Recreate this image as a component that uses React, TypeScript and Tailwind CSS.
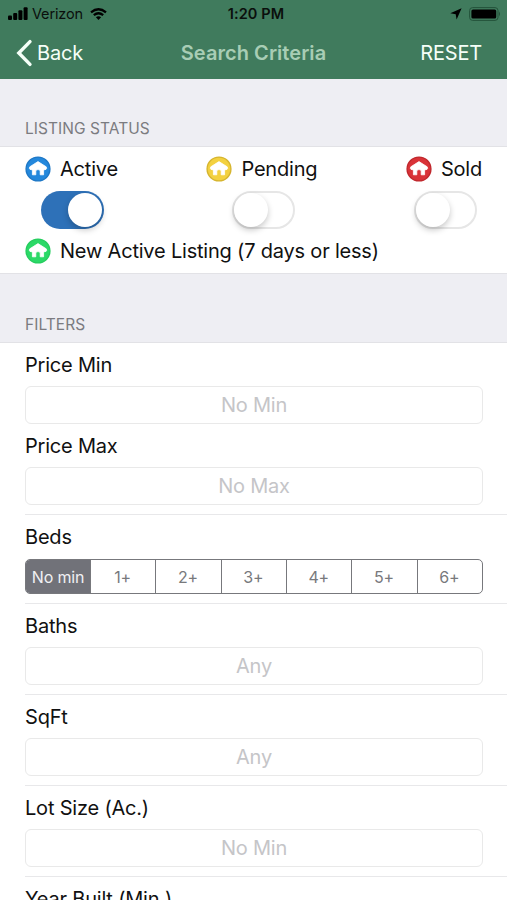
import React from "react";

type StatusColor = { fill: string; ring: string };

function HouseBadge({ color }: { color: StatusColor }) {
  return (
    <svg width="26" height="26" viewBox="0 0 26 26" className="shrink-0">
      <circle cx="13" cy="13" r="11.9" fill={color.fill} stroke={color.ring} strokeWidth="1.4" />
      <path
        d="M13 5.6 L21.2 10.8 Q22.2 12.6 21 13.4 L18.6 13.9 V18.8 H15.2 V14.4 Q13 12.6 10.8 14.4 V18.8 H7.4 V13.9 L5 13.4 Q3.8 12.6 4.8 10.8 Z"
        fill="#fff"
        stroke="#fff"
        strokeWidth="0.8"
        strokeLinejoin="round"
      />
    </svg>
  );
}

function StatusLabel({ color, text }: { color: StatusColor; text: string }) {
  return (
    <div className="flex h-[26px] items-center">
      <HouseBadge color={color} />
      <span className="ml-[9px] whitespace-nowrap">{text}</span>
    </div>
  );
}

function Toggle({ on = false }: { on?: boolean }) {
  return (
    <div
      className={
        on
          ? "flex h-[38px] w-[63px] items-center justify-end rounded-full bg-[#2e71b8] px-[2px]"
          : "flex h-[38px] w-[63px] items-center justify-start rounded-full border-2 border-[#e6e6e6] bg-white"
      }
    >
      <div className="size-[34px] rounded-full bg-white shadow-[0_3px_6px_rgba(0,0,0,0.22)]" />
    </div>
  );
}

function Field({ label, placeholder }: { label: string; placeholder: string }) {
  return (
    <div className="pt-[9px]">
      <div className="h-[26px]">{label}</div>
      <div className="mt-2 mr-6 flex h-[38px] items-center justify-center rounded-[6px] border border-[#e9e9e9] text-[#c5c5c8]">
        {placeholder}
      </div>
    </div>
  );
}

function Row({ children }: { children: React.ReactNode }) {
  return <div className="ml-[25px] border-b border-[#e8e8ea] pb-[9px]">{children}</div>;
}

function SectionTitle({ children }: { children: React.ReactNode }) {
  return (
    <div className="flex items-end bg-[#eeeef3] pb-[7px] pl-[25px] text-[15.5px] leading-5 tracking-[0.05px] text-[#7b7b80]">
      {children}
    </div>
  );
}

const blue = { fill: "#2488dc", ring: "#1f78c6" };
const yellow = { fill: "#f3d140", ring: "#d6b52f" };
const red = { fill: "#d93338", ring: "#c0282d" };
const green = { fill: "#2bd967", ring: "#25cd5e" };
const beds = ["No min", "1+", "2+", "3+", "4+", "5+", "6+"];

export default function App() {
  return (
    <div className="flex h-[900px] w-[507px] flex-col overflow-hidden bg-white font-['Inter',sans-serif] text-[20px] leading-[26px] tracking-[-0.2px] text-[#111]">
      <header className="h-[79px] shrink-0 bg-[#407b5d]">
        <div className="grid h-[27px] grid-cols-3 items-center text-[14.5px] text-[#0a0f0c]">
          <div className="flex items-center pl-2">
            <svg width="20" height="13" viewBox="0 0 20 13" fill="#000">
              <rect x="0" y="8.5" width="4" height="4.5" rx="1" />
              <rect x="5.2" y="6" width="4" height="7" rx="1" />
              <rect x="10.4" y="3.2" width="4" height="9.8" rx="1" />
              <rect x="15.6" y="0.3" width="4" height="12.7" rx="1" />
            </svg>
            <span className="ml-[4px] tracking-[-0.15px]">Verizon</span>
            <svg width="17" height="12" viewBox="0 0 17 12" className="ml-[7px]" fill="none" stroke="#000" strokeWidth="2.3">
              <path d="M1 4.3 Q8.5 -1.8 16 4.3" />
              <path d="M3.8 7.2 Q8.5 3.4 13.2 7.2" />
              <path d="M8.5 12 L5.9 9.3 Q8.5 7.2 11.1 9.3 Z" fill="#000" stroke="none" />
            </svg>
          </div>
          <div className="pl-[5px] text-center font-semibold tracking-[0.1px]">1:20 PM</div>
          <div className="flex items-center justify-end pr-[6px]">
            <svg width="12" height="12" viewBox="0 0 12 12" className="mr-[7px]">
              <path d="M11.6 0.3 L6.6 11.6 L5.7 6.2 L0.3 5.3 Z" fill="#000" />
            </svg>
            <svg width="32" height="14" viewBox="0 0 32 14">
              <rect x="0.6" y="0.6" width="28.4" height="12.8" rx="3" fill="none" stroke="#23523a" strokeWidth="1" />
              <rect x="2.4" y="2.4" width="24.8" height="9.2" rx="1.6" fill="#000" />
              <path d="M30 4.6 Q32 7 30 9.4 Z" fill="#23523a" />
            </svg>
          </div>
        </div>
        <div className="grid h-[52px] grid-cols-3 items-center">
          <div className="flex items-center pl-4 text-[#f5fff8]">
            <svg width="17" height="28" viewBox="0 0 17 28" fill="none" stroke="currentColor" strokeWidth="3.4" strokeLinecap="round">
              <path d="M14 2.6 L2.8 14 L14 25.4" />
            </svg>
            <span className="ml-[4px]">Back</span>
          </div>
          <div className="text-center font-semibold tracking-[0.05px] whitespace-nowrap text-[#a8cdb5]">Search Criteria</div>
          <div className="pr-[25px] text-right text-[#f5fff8]">RESET</div>
        </div>
      </header>

      <div className="grid h-[68px] shrink-0 border-b border-[#e2e2e6]">
        <SectionTitle>LISTING STATUS</SectionTitle>
      </div>
      <section className="h-[126px] shrink-0 pt-[9px]">
        <div className="flex justify-between pr-[25px] pl-[25px]">
          <StatusLabel color={blue} text="Active" />
          <StatusLabel color={yellow} text="Pending" />
          <StatusLabel color={red} text="Sold" />
        </div>
        <div className="mt-[9px] flex pl-[41px]">
          <Toggle on />
          <div className="ml-[128px]">
            <Toggle />
          </div>
          <div className="ml-[119px]">
            <Toggle />
          </div>
        </div>
        <div className="mt-[9px] pl-[25px]">
          <StatusLabel color={green} text="New Active Listing (7 days or less)" />
        </div>
      </section>
      <div className="grid h-[70px] shrink-0 border-y border-[#e2e2e6]">
        <SectionTitle>FILTERS</SectionTitle>
      </div>

      <section className="shrink-0">
        <Row>
          <Field label="Price Min" placeholder="No Min" />
          <Field label="Price Max" placeholder="No Max" />
        </Row>
        <Row>
          <div className="pt-[9px]">
            <div className="h-[26px]">Beds</div>
            <div className="mt-[9px] mr-6 grid h-[35px] grid-cols-[64px_repeat(6,minmax(0,1fr))] overflow-hidden rounded-[5px] border border-[#77787c] text-[16px] text-[#78797c]">
              {beds.map((bed, i) => (
                <div
                  key={bed}
                  className={
                    i === 0
                      ? "flex items-center justify-center bg-[#717279] whitespace-nowrap text-[#f0f0f3]"
                      : "flex items-center justify-center border-l border-[#77787c] pr-px"
                  }
                >
                  {bed}
                </div>
              ))}
            </div>
          </div>
        </Row>
        <Row>
          <Field label="Baths" placeholder="Any" />
        </Row>
        <Row>
          <Field label="SqFt" placeholder="Any" />
        </Row>
        <Row>
          <Field label="Lot Size (Ac.)" placeholder="No Min" />
        </Row>
        <Row>
          <Field label="Year Built (Min.)" placeholder="Any" />
        </Row>
      </section>
    </div>
  );
}
